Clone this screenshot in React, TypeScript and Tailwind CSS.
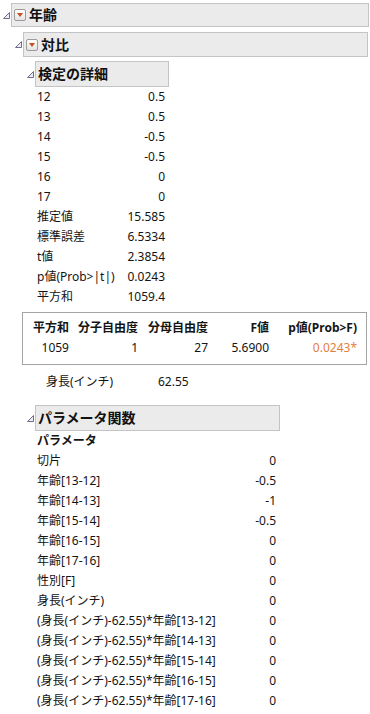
import React from "react";

const detailRows: [string, string][] = [
  ["12", "0.5"],
  ["13", "0.5"],
  ["14", "-0.5"],
  ["15", "-0.5"],
  ["16", "0"],
  ["17", "0"],
  ["推定値", "15.585"],
  ["標準誤差", "6.5334"],
  ["t値", "2.3854"],
  ["p値(Prob>|t|)", "0.0243"],
  ["平方和", "1059.4"],
];

const paramRows: [string, string][] = [
  ["切片", "0"],
  ["年齢[13-12]", "-0.5"],
  ["年齢[14-13]", "-1"],
  ["年齢[15-14]", "-0.5"],
  ["年齢[16-15]", "0"],
  ["年齢[17-16]", "0"],
  ["性別[F]", "0"],
  ["身長(インチ)", "0"],
  ["(身長(インチ)-62.55)*年齢[13-12]", "0"],
  ["(身長(インチ)-62.55)*年齢[14-13]", "0"],
  ["(身長(インチ)-62.55)*年齢[15-14]", "0"],
  ["(身長(インチ)-62.55)*年齢[16-15]", "0"],
  ["(身長(インチ)-62.55)*年齢[17-16]", "0"],
];

function Disclosure() {
  return (
    <svg width="9" height="9" viewBox="0 0 9 9" className="shrink-0">
      <path d="M7.5 1.5 L7.5 7.5 L1.5 7.5 Z" fill="#ececf4" stroke="#6e6e8e" strokeWidth="1" />
    </svg>
  );
}

function Toggle() {
  return (
    <div className="w-[12px] h-[12px] shrink-0 rounded-[2px] border border-[#9c9c9c] bg-gradient-to-b from-white to-[#e4e4e4] flex items-center justify-center">
      <svg width="6" height="4" viewBox="0 0 6 4">
        <path d="M0 0 L6 0 L3 4 Z" fill="#c4501a" />
      </svg>
    </div>
  );
}

function Outline({
  title,
  toggle,
  className,
}: {
  title: string;
  toggle?: boolean;
  className: string;
}) {
  return (
    <div className="flex items-center">
      <Disclosure />
      <div
        className={`flex items-center gap-[3px] pl-[2px] border border-[#c4c4c4] bg-[#ebebeb] ${className}`}
      >
        {toggle && <Toggle />}
        <span className="text-[14px] font-bold text-[#111] leading-none">{title}</span>
      </div>
    </div>
  );
}

export default function App() {
  return (
    <div className="w-[370px] h-[714px] bg-white overflow-hidden text-[12px] text-[#141414] font-['Noto_Sans','Noto_Sans_CJK_JP',sans-serif]">
      <div className="pt-[3px] pl-[2px]">
        <Outline title="年齢" toggle className="w-[358px] h-[24px]" />
      </div>
      <div className="mt-[5px] pl-[14px]">
        <Outline title="対比" toggle className="w-[345px] h-[25px]" />
      </div>
      <div className="mt-[4px] pl-[26px]">
        <Outline title="検定の詳細" className="w-[134px] h-[26px]" />
      </div>

      <div className="ml-[37px] w-[128px]">
        {detailRows.map(([k, v]) => (
          <div key={k} className="h-[20px] flex items-center justify-between">
            <span>{k}</span>
            <span>{v}</span>
          </div>
        ))}
      </div>

      <div className="mt-[5px] ml-[22px] w-[345px] h-[53px] border border-[#a4a4a4] pt-[6px]">
        <div className="grid grid-cols-[46px_69px_70px_61px_88px] text-right">
          <div className="h-[20px] font-bold">平方和</div>
          <div className="h-[20px] font-bold">分子自由度</div>
          <div className="h-[20px] font-bold">分母自由度</div>
          <div className="h-[20px] font-bold">F値</div>
          <div className="h-[20px] font-bold">p値(Prob&gt;F)</div>
          <div className="h-[20px]">1059</div>
          <div className="h-[20px]">1</div>
          <div className="h-[20px]">27</div>
          <div className="h-[20px]">5.6900</div>
          <div className="h-[20px] text-[#e4803e]">0.0243*</div>
        </div>
      </div>

      <div className="mt-[7px] ml-[46px] h-[20px] flex items-center">
        <span className="w-[112px]">身長(インチ)</span>
        <span>62.55</span>
      </div>

      <div className="mt-[13px] pl-[26px]">
        <Outline title="パラメータ関数" className="w-[245px] h-[26px]" />
      </div>

      <div className="ml-[37px] w-[239px]">
        <div className="h-[20px] flex items-center font-bold">パラメータ</div>
        {paramRows.map(([k, v]) => (
          <div key={k} className="h-[20px] flex items-center justify-between">
            <span>{k}</span>
            <span>{v}</span>
          </div>
        ))}
      </div>
    </div>
  );
}
